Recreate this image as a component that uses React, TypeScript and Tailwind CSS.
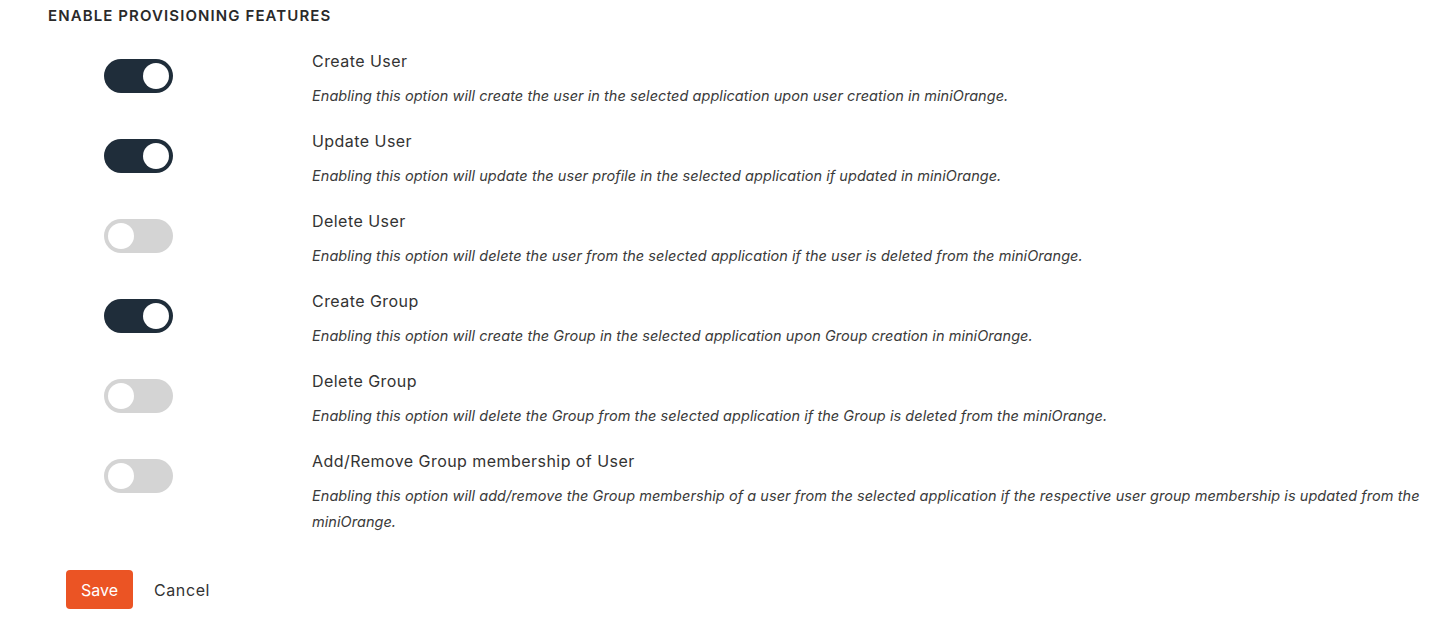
import React from "react";

const rows = [
  { label: "Create User", on: true, desc: "Enabling this option will create the user in the selected application upon user creation in miniOrange." },
  { label: "Update User", on: true, desc: "Enabling this option will update the user profile in the selected application if updated in miniOrange." },
  { label: "Delete User", on: false, desc: "Enabling this option will delete the user from the selected application if the user is deleted from the miniOrange." },
  { label: "Create Group", on: true, desc: "Enabling this option will create the Group in the selected application upon Group creation in miniOrange." },
  { label: "Delete Group", on: false, desc: "Enabling this option will delete the Group from the selected application if the Group is deleted from the miniOrange." },
  { label: "Add/Remove Group membership of User", on: false, desc: "Enabling this option will add/remove the Group membership of a user from the selected application if the respective user group membership is updated from the miniOrange." },
];

function Toggle({ on }: { on: boolean }) {
  return on ? (
    <div className="flex h-[34px] w-[69px] items-center justify-end rounded-full bg-[#1f2d3a] pr-[4px]">
      <div className="h-[26px] w-[26px] rounded-full bg-white" />
    </div>
  ) : (
    <div className="flex h-[34px] w-[69px] items-center justify-start rounded-full bg-[#d4d4d4] pl-[4px]">
      <div className="h-[26px] w-[26px] rounded-full bg-white" />
    </div>
  );
}

export default function App() {
  return (
    <div className="h-[618px] w-[1438px] bg-white text-[#333] [font-family:Inter,'Open_Sans',sans-serif]">
      <div className="pl-[48px] pt-[6px]">
        <div className="text-[15px] leading-[20px] font-semibold tracking-[1.1px] text-[#2a2a2a]">ENABLE PROVISIONING FEATURES</div>
      </div>
      <div className="mt-[23px] flex flex-col">
        {rows.map((r) => (
          <div key={r.label} className="flex pb-[20px]">
            <div className="w-[312px] shrink-0 pl-[104px] pt-[10px]">
              <Toggle on={r.on} />
            </div>
            <div className="flex flex-col pr-[14px]">
              <div className="text-[16px] leading-[24px] tracking-[0.45px] text-[#333]">{r.label}</div>
              <div className="mt-[10px] text-[14.5px] leading-[26px] tracking-[0.05px] italic text-[#3a3a3a]">{r.desc}</div>
            </div>
          </div>
        ))}
      </div>
      <div className="mt-[15px] flex items-center pl-[66px]">
        <button className="h-[39px] w-[67px] rounded-[4px] bg-[#eb5424] text-[16px] text-white">Save</button>
        <button className="ml-[21px] text-[16px] tracking-[0.6px] text-[#333]">Cancel</button>
      </div>
    </div>
  );
}
